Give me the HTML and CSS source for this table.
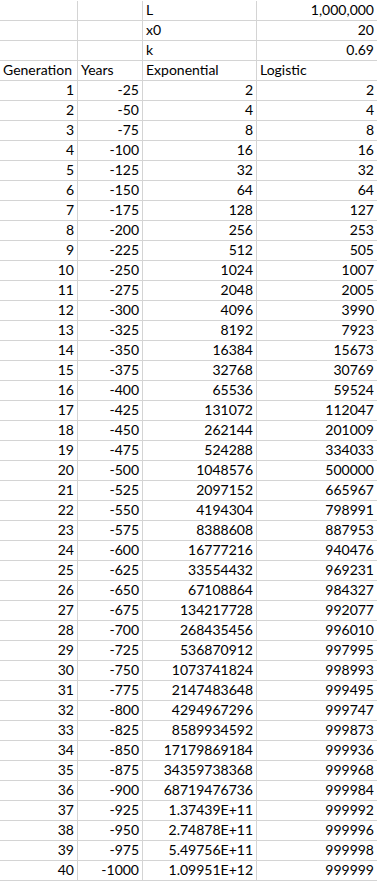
FILE: index.html
```html
<!DOCTYPE html>
<html>
<head>
<meta charset="utf-8">
<link rel="stylesheet" href="styles.css">
</head>
<body>
<div class="sheet">
<table class="grid">
<colgroup><col class="c1"><col class="c2"><col class="c3"><col class="c4"></colgroup>
<tbody>
<tr><td></td><td></td><td>L</td><td class="n">1,000,000</td></tr>
<tr><td></td><td></td><td>x0</td><td class="n">20</td></tr>
<tr><td></td><td></td><td>k</td><td class="n">0.69</td></tr>
<tr><td>Generation</td><td>Years</td><td>Exponential</td><td>Logistic</td></tr>
<tr><td class="n">1</td><td class="n">-25</td><td class="n">2</td><td class="n">2</td></tr>
<tr><td class="n">2</td><td class="n">-50</td><td class="n">4</td><td class="n">4</td></tr>
<tr><td class="n">3</td><td class="n">-75</td><td class="n">8</td><td class="n">8</td></tr>
<tr><td class="n">4</td><td class="n">-100</td><td class="n">16</td><td class="n">16</td></tr>
<tr><td class="n">5</td><td class="n">-125</td><td class="n">32</td><td class="n">32</td></tr>
<tr><td class="n">6</td><td class="n">-150</td><td class="n">64</td><td class="n">64</td></tr>
<tr><td class="n">7</td><td class="n">-175</td><td class="n">128</td><td class="n">127</td></tr>
<tr><td class="n">8</td><td class="n">-200</td><td class="n">256</td><td class="n">253</td></tr>
<tr><td class="n">9</td><td class="n">-225</td><td class="n">512</td><td class="n">505</td></tr>
<tr><td class="n">10</td><td class="n">-250</td><td class="n">1024</td><td class="n">1007</td></tr>
<tr><td class="n">11</td><td class="n">-275</td><td class="n">2048</td><td class="n">2005</td></tr>
<tr><td class="n">12</td><td class="n">-300</td><td class="n">4096</td><td class="n">3990</td></tr>
<tr><td class="n">13</td><td class="n">-325</td><td class="n">8192</td><td class="n">7923</td></tr>
<tr><td class="n">14</td><td class="n">-350</td><td class="n">16384</td><td class="n">15673</td></tr>
<tr><td class="n">15</td><td class="n">-375</td><td class="n">32768</td><td class="n">30769</td></tr>
<tr><td class="n">16</td><td class="n">-400</td><td class="n">65536</td><td class="n">59524</td></tr>
<tr><td class="n">17</td><td class="n">-425</td><td class="n">131072</td><td class="n">112047</td></tr>
<tr><td class="n">18</td><td class="n">-450</td><td class="n">262144</td><td class="n">201009</td></tr>
<tr><td class="n">19</td><td class="n">-475</td><td class="n">524288</td><td class="n">334033</td></tr>
<tr><td class="n">20</td><td class="n">-500</td><td class="n">1048576</td><td class="n">500000</td></tr>
<tr><td class="n">21</td><td class="n">-525</td><td class="n">2097152</td><td class="n">665967</td></tr>
<tr><td class="n">22</td><td class="n">-550</td><td class="n">4194304</td><td class="n">798991</td></tr>
<tr><td class="n">23</td><td class="n">-575</td><td class="n">8388608</td><td class="n">887953</td></tr>
<tr><td class="n">24</td><td class="n">-600</td><td class="n">16777216</td><td class="n">940476</td></tr>
<tr><td class="n">25</td><td class="n">-625</td><td class="n">33554432</td><td class="n">969231</td></tr>
<tr><td class="n">26</td><td class="n">-650</td><td class="n">67108864</td><td class="n">984327</td></tr>
<tr><td class="n">27</td><td class="n">-675</td><td class="n">134217728</td><td class="n">992077</td></tr>
<tr><td class="n">28</td><td class="n">-700</td><td class="n">268435456</td><td class="n">996010</td></tr>
<tr><td class="n">29</td><td class="n">-725</td><td class="n">536870912</td><td class="n">997995</td></tr>
<tr><td class="n">30</td><td class="n">-750</td><td class="n">1073741824</td><td class="n">998993</td></tr>
<tr><td class="n">31</td><td class="n">-775</td><td class="n">2147483648</td><td class="n">999495</td></tr>
<tr><td class="n">32</td><td class="n">-800</td><td class="n">4294967296</td><td class="n">999747</td></tr>
<tr><td class="n">33</td><td class="n">-825</td><td class="n">8589934592</td><td class="n">999873</td></tr>
<tr><td class="n">34</td><td class="n">-850</td><td class="n">17179869184</td><td class="n">999936</td></tr>
<tr><td class="n">35</td><td class="n">-875</td><td class="n">34359738368</td><td class="n">999968</td></tr>
<tr><td class="n">36</td><td class="n">-900</td><td class="n">68719476736</td><td class="n">999984</td></tr>
<tr><td class="n">37</td><td class="n">-925</td><td class="n">1.37439E+11</td><td class="n">999992</td></tr>
<tr><td class="n">38</td><td class="n">-950</td><td class="n">2.74878E+11</td><td class="n">999996</td></tr>
<tr><td class="n">39</td><td class="n">-975</td><td class="n">5.49756E+11</td><td class="n">999998</td></tr>
<tr><td class="n">40</td><td class="n">-1000</td><td class="n">1.09951E+12</td><td class="n">999999</td></tr>
</tbody>
</table>
</div>
</body>
</html>
```
FILE: styles.css
```css
html, body {
  margin: 0;
  padding: 0;
  background: #ffffff;
}

.sheet {
  padding-top: 1px;
  overflow: hidden;
  width: 377px;
}

.grid {
  border-collapse: separate;
  border-spacing: 0;
  table-layout: fixed;
  width: 378px;
  font-family: Lato, "Open Sans", sans-serif;
  font-size: 14px;
  color: #000000;
}

.c1 { width: 78px; }
.c2 { width: 65px; }
.c3 { width: 114px; }
.c4 { width: 121px; }

.grid td {
  height: 20px;
  padding: 0 3px 2px 3px;
  border-right: 1px solid #d4d4d4;
  border-bottom: 1px solid #d4d4d4;
  vertical-align: bottom;
  white-space: nowrap;
  overflow: hidden;
  line-height: 16px;
  box-sizing: border-box;
}

.grid td.n {
  text-align: right;
}
```
